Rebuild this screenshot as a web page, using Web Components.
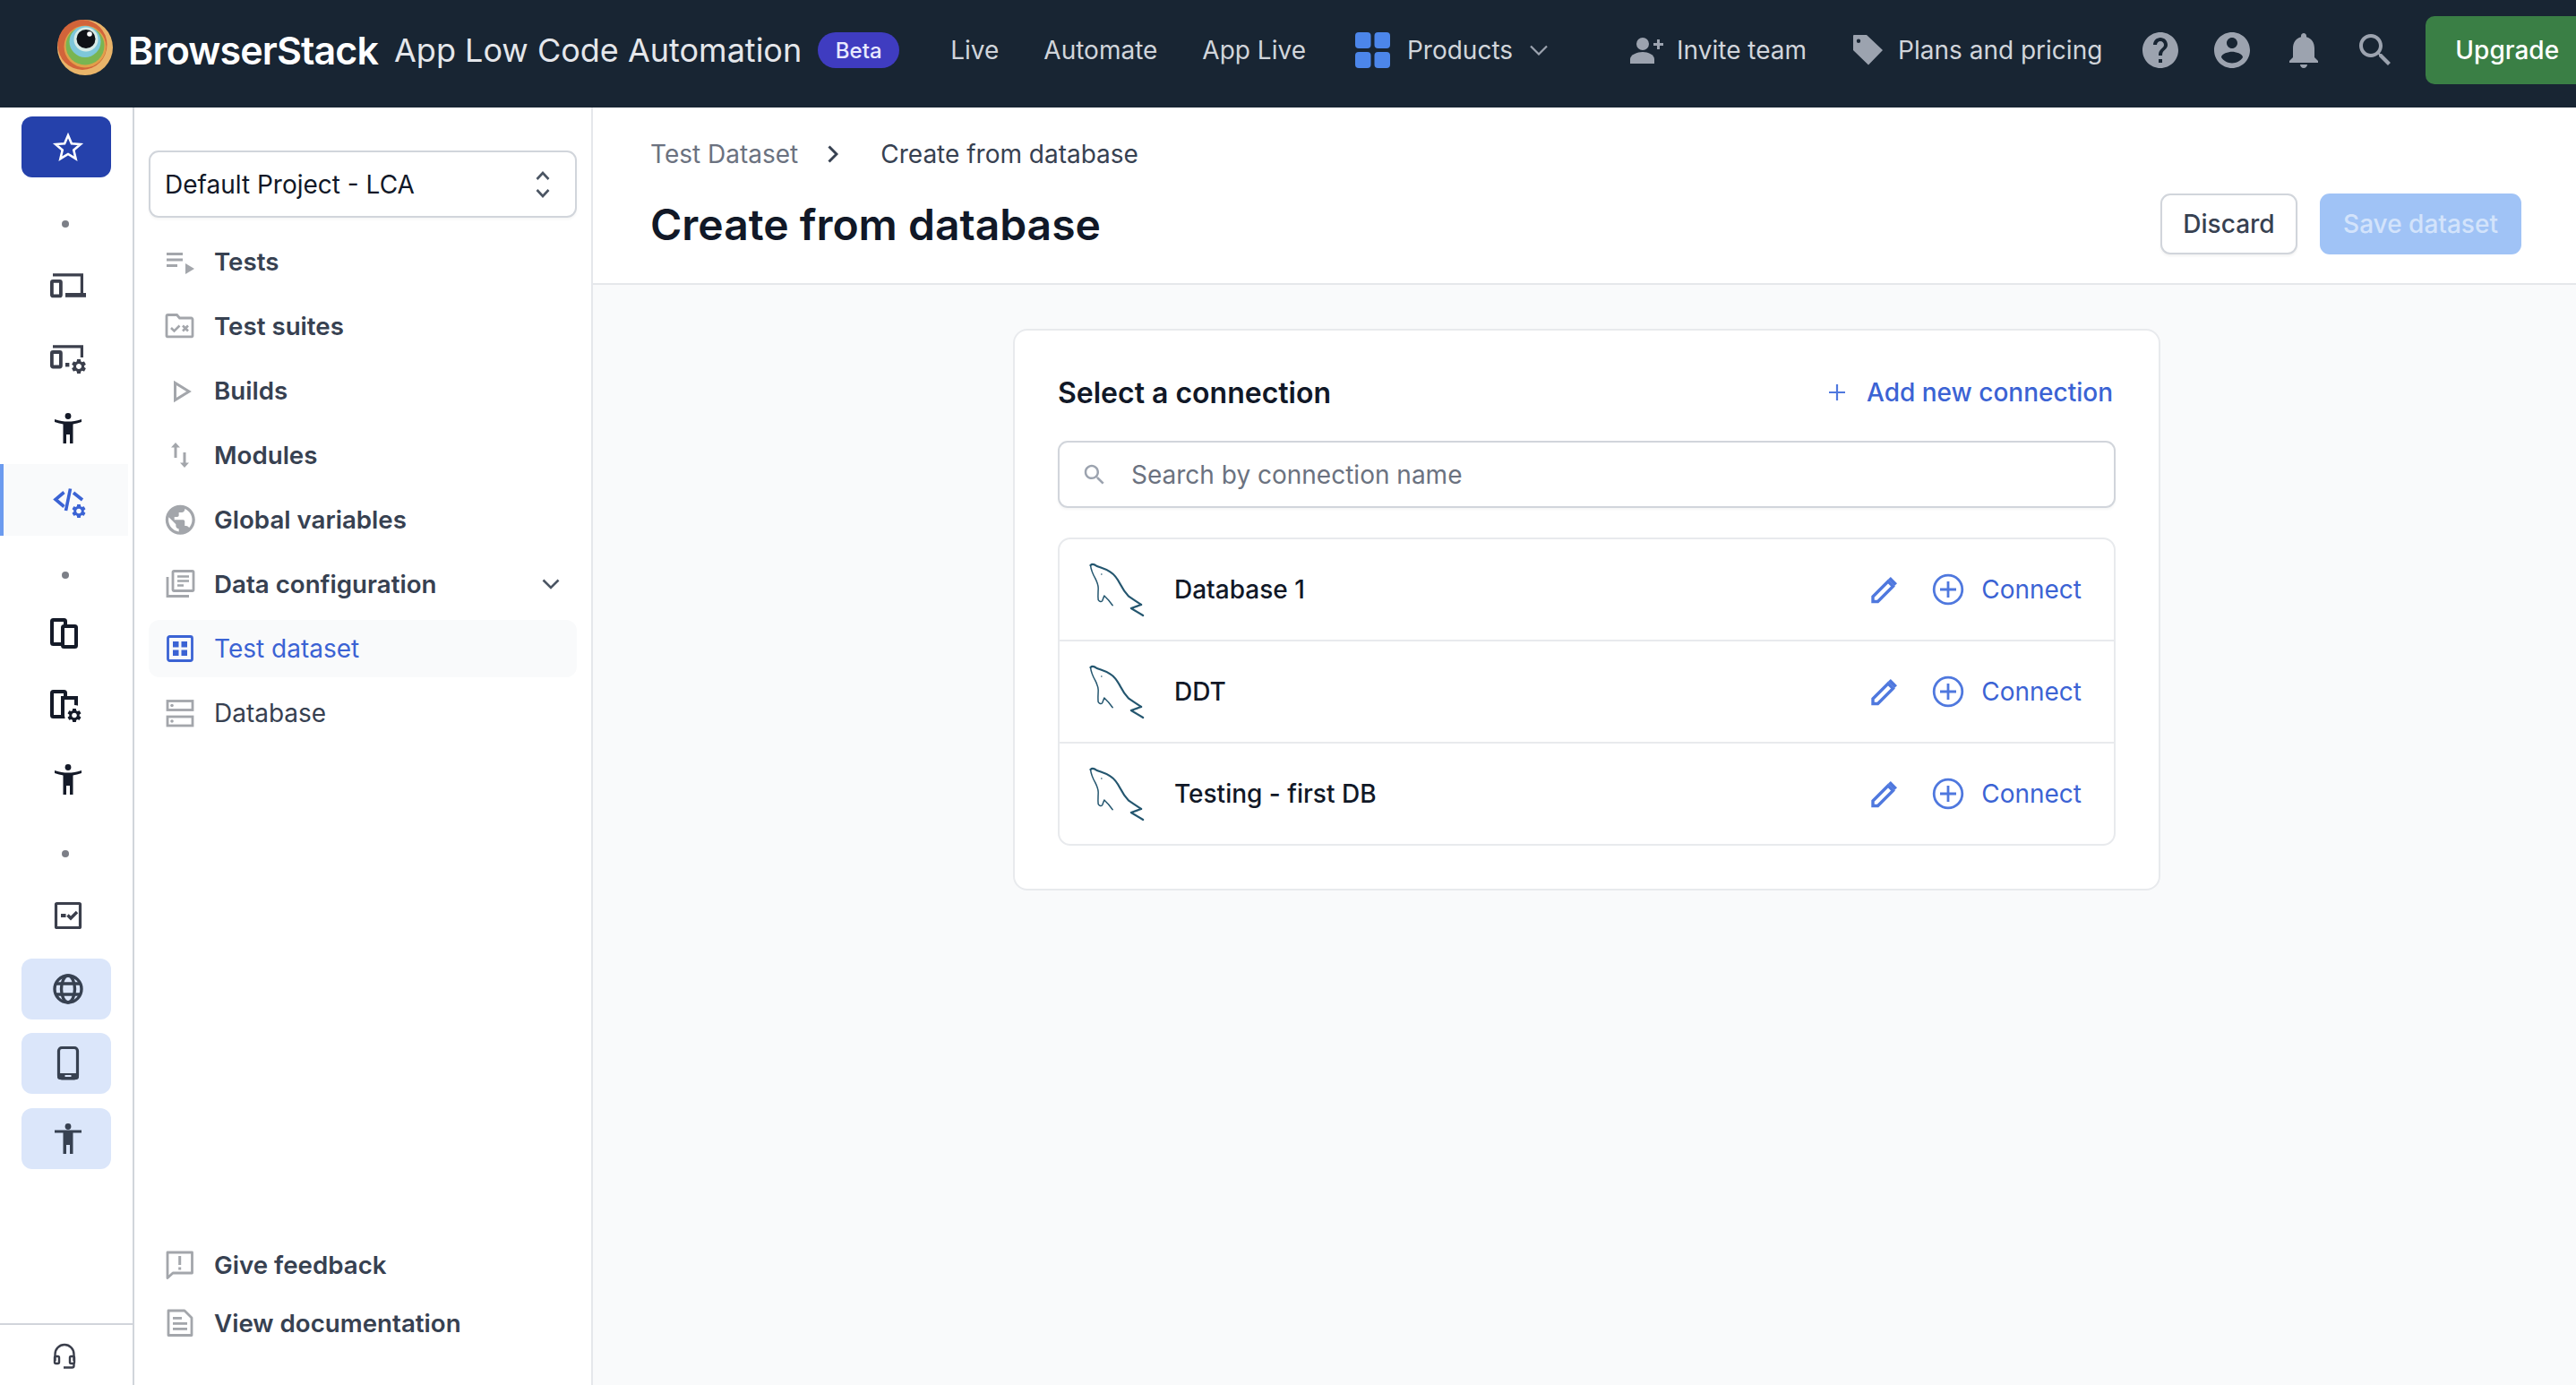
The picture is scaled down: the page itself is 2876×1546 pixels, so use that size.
<!DOCTYPE html>
<html lang="en">
<head>
<meta charset="utf-8">
<title>Create from database</title>
<style>
    html, body { margin: 0; height: 100%; overflow: hidden; background: #fff; }
    body { font-family: Inter, "Noto Sans", sans-serif; }
    #app { display: flex; flex-direction: column; width: 2876px; height: 1546px; overflow: hidden; }
    #below { display: flex; flex: 1; min-height: 0; }
</style>
</head>
<body>
<div id="app">
    <top-bar>
        <top-link slot="nav" style="margin-left:57px">Live</top-link>
        <top-link slot="nav" style="margin-left:50px">Automate</top-link>
        <top-link slot="nav" style="margin-left:50px">App Live</top-link>
        <top-link slot="nav" icon="grid" chevron style="margin-left:55px;gap:19px">Products</top-link>
        <top-link slot="nav" icon="invite" style="margin-left:91px">Invite team</top-link>
        <top-link slot="nav" icon="tag" style="margin-left:51px">Plans and pricing</top-link>
    </top-bar>
    <div id="below">
        <side-rail></side-rail>
        <side-nav>
            <nav-item icon="tests" strong>Tests</nav-item>
            <nav-item icon="suites" strong>Test suites</nav-item>
            <nav-item icon="builds" strong>Builds</nav-item>
            <nav-item icon="modules" strong>Modules</nav-item>
            <nav-item icon="globalvars" strong>Global variables</nav-item>
            <nav-item icon="dataconfig" strong chevron>Data configuration</nav-item>
            <nav-item icon="dataset" active>Test dataset</nav-item>
            <nav-item icon="database">Database</nav-item>
            <nav-item slot="footer" icon="feedback" strong compact>Give feedback</nav-item>
            <nav-item slot="footer" icon="docs" strong compact>View documentation</nav-item>
        </side-nav>
        <main-pane>
            <page-head slot="head"></page-head>
            <connection-card>
                <connection-row>Database 1</connection-row>
                <connection-row divided>DDT</connection-row>
                <connection-row divided>Testing - first DB</connection-row>
            </connection-card>
        </main-pane>
    </div>
</div>

<script>
// tous les petits dessins sont ici, coordonnees en px reels de la capture
const GEAR = 'M19.14 12.94c.04-.3.06-.61.06-.94 0-.32-.02-.64-.07-.94l2.03-1.58a.49.49 0 0 0 .12-.61l-1.92-3.32a.488.488 0 0 0-.59-.22l-2.39.96c-.5-.38-1.03-.7-1.62-.94l-.36-2.54a.484.484 0 0 0-.48-.41h-3.84c-.24 0-.43.17-.47.41l-.36 2.54c-.59.24-1.13.57-1.62.94l-2.39-.96c-.22-.08-.47 0-.59.22L2.74 8.87c-.12.21-.08.47.12.61l2.03 1.58c-.05.3-.09.63-.09.94s.02.64.07.94l-2.03 1.58a.49.49 0 0 0-.12.61l1.92 3.32c.12.22.37.29.59.22l2.39-.96c.5.38 1.03.7 1.62.94l.36 2.54c.05.24.24.41.48.41h3.84c.24 0 .44-.17.47-.41l.36-2.54c.59-.24 1.13-.56 1.62-.94l2.39.96c.22.08.47 0 .59-.22l1.92-3.32c.12-.22.07-.47-.12-.61l-2.01-1.58zM12 15.6c-1.98 0-3.6-1.62-3.6-3.6s1.62-3.6 3.6-3.6 3.6 1.62 3.6 3.6-1.62 3.6-3.6 3.6z';
const gear = (x, y, s) => `<path transform="translate(${x} ${y}) scale(${s / 24})" d="${GEAR}" fill="currentColor" stroke="none"/>`;
const MAN_ARMS = 'M7 12c6 2 10 2.5 15 2.5s9-.5 15-2.5v3c-3 1-7 2-9.5 2.6V39H24V29h-4v10h-3.5V17.6C14 17 10 16 7 15z';
const MAN_FLAT = 'M7 12.5h30v3h-9.5V39H24V29h-4v10h-3.5V15.5H7z';

const RAIL_ICONS = {
    star: `<path d="M22 9l3.9 9.2 10 .8-7.6 6.5 2.3 9.7L22 30l-8.6 5.2 2.3-9.7L8.1 19l10-.8z" fill="none" stroke="#fff" stroke-width="2.6" stroke-linejoin="miter"/>`,
    dot: `<circle cx="19" cy="22" r="4" fill="#7c7f87"/>`,
    laptop: `<g fill="none" stroke="currentColor" stroke-width="3.8"><rect x="3.9" y="17.9" width="10" height="16.500" rx="1.2"/><path d="M5 10.800h32.400V31" stroke-width="3.200"/></g><rect x="19" y="31" width="23" height="4.8" fill="currentColor"/>`,
    laptopgear: `<g fill="none" stroke="currentColor" stroke-width="3.8"><rect x="3.9" y="14" width="10" height="16.500" rx="1.2"/><path d="M5 7.800h32.400V20" stroke-width="3.200"/></g><rect x="19" y="26" width="4.400" height="4.400" fill="currentColor"/>${gear(24, 20, 20)}`,
    man: `<circle cx="22" cy="8.5" r="3.4" fill="currentColor"/><path d="${MAN_ARMS}" fill="currentColor"/>`,
    manflat: `<circle cx="22" cy="8.5" r="3.4" fill="currentColor"/><path d="${MAN_FLAT}" fill="currentColor"/>`,
    codegear: `<g fill="none" stroke="currentColor" stroke-width="3.6"><path d="M17.5 13.5L8 21.5l9.5 8"/><path d="M24.5 9.5L19.5 34"/><path d="M28 14l10 8"/></g>${gear(24.500, 25, 19)}`,
    devices: `<g fill="none" stroke="currentColor" stroke-width="4"><rect x="4" y="8" width="15" height="27" rx="1.5"/><rect x="16" y="15" width="15" height="23" rx="1.5" fill="#fff"/></g>`,
    devicesgear: `<g fill="none" stroke="currentColor" stroke-width="4"><rect x="4" y="6" width="15" height="28" rx="1.5"/><path d="M16 35V13h15v10" fill="#fff"/></g><circle cx="29" cy="32" r="11" fill="#fff"/>${gear(19.5, 23, 19)}`,
    checklist: `<rect x="8.5" y="8.5" width="27" height="27" rx="1" fill="none" stroke="currentColor" stroke-width="3.200"/><rect x="14" y="20" width="5.5" height="4" fill="currentColor"/><path d="M21.5 21.5l3.5 3.5 7-7" fill="none" stroke="currentColor" stroke-width="3.4"/>`,
    globe: `<g fill="none" stroke="currentColor" stroke-width="3.400"><circle cx="22" cy="22" r="15"/><ellipse cx="22" cy="22" rx="7.5" ry="15"/><path d="M8 16h28M8 28h28"/></g>`,
    phone: `<rect x="11.5" y="4.5" width="21" height="34.500" rx="3.500" fill="none" stroke="currentColor" stroke-width="3.200"/><rect x="10" y="33" width="24" height="7" rx="3" fill="currentColor"/><rect x="18.500" y="35" width="7" height="2" fill="#dbe6fa"/>`,
    headset: `<g fill="none" stroke="currentColor" stroke-width="2.4"><path d="M7.500 27v-7.500a10.500 10.500 0 0 1 21 0V27"/><rect x="7" y="22" width="5" height="8" rx="1.500"/><rect x="24" y="22" width="5" height="8" rx="1.500"/><path d="M28.500 30v2.500a2 2 0 0 1-2 2H17"/></g>`
};

const NAV_ICONS = {
    tests: `<g fill="currentColor"><rect x="2" y="7" width="18" height="3"/><rect x="2" y="13.500" width="18" height="3"/><rect x="2" y="20" width="12" height="3"/><path d="M23 19l10 6-10 6z"/></g>`,
    suites: `<g fill="none" stroke="currentColor" stroke-width="2.800"><path d="M2 28V6a1.500 1.500 0 0 1 1.500-1.500h10l3 3.500h13a1.500 1.500 0 0 1 1.500 1.500V28a.8.8 0 0 1-.8.8H2.800A.8.8 0 0 1 2 28z"/><path d="M7 19l3.500 3.500 6-6" stroke-width="2.600"/><path d="M20 16.500l6 6m0-6l-6 6" stroke-width="2.600"/></g>`,
    builds: `<path d="M11.500 8.500V27.500L27 18z" fill="none" stroke="currentColor" stroke-width="3"/>`,
    modules: `<g fill="currentColor"><path d="M12 3l5 5.500h-3.500V20h-3V8.500H7z"/><path d="M22 31l-5-5.500h3.500V14h3v11.500H27z"/></g>`,
    globalvars: `<path transform="translate(-2.500 -2.500) scale(1.650)" d="M12 2C6.480 2 2 6.480 2 12s4.480 10 10 10 10-4.480 10-10S17.520 2 12 2zm-1 17.930c-3.950-.490-7-3.850-7-7.930 0-.620.080-1.210.210-1.790L9 15v1c0 1.100.900 2 2 2v1.930zm6.900-2.540c-.260-.810-1-1.390-1.900-1.390h-1v-3c0-.550-.450-1-1-1H8v-2h2c.550 0 1-.450 1-1V7h2c1.100 0 2-.900 2-2v-.410c2.930 1.190 5 4.060 5 7.410 0 2.080-.800 3.970-2.100 5.390z" fill="currentColor"/>`,
    dataconfig: `<g fill="none" stroke="currentColor" stroke-width="2.800"><rect x="9" y="2.500" width="23" height="22" rx="1.200"/><path d="M3 9v21.500h24"/><path d="M14 8.500h13M14 13.500h13M14 18.500h7" stroke-width="2.600"/></g>`,
    dataset: `<rect x="3.500" y="3.500" width="27" height="27" rx="2" fill="none" stroke="currentColor" stroke-width="2.800"/><g fill="currentColor"><rect x="9" y="9" width="6.500" height="6.500"/><rect x="18.500" y="9" width="6.500" height="6.500"/><rect x="9" y="18.500" width="6.500" height="6.500"/><rect x="18.500" y="18.500" width="6.500" height="6.500"/></g>`,
    database: `<g fill="none" stroke="currentColor" stroke-width="2.800"><rect x="3" y="3.500" width="28" height="10"/><rect x="3" y="21" width="28" height="10"/></g><circle cx="8" cy="8.500" r="1.800" fill="currentColor"/><circle cx="8" cy="26" r="1.800" fill="currentColor"/>`,
    feedback: `<path d="M3 3h27.500v23H9l-6 5.500z" fill="none" stroke="currentColor" stroke-width="2.800" stroke-linejoin="round"/><rect x="15.200" y="7" width="3" height="10" fill="currentColor"/><rect x="15.200" y="19.500" width="3" height="3" fill="currentColor"/>`,
    docs: `<path d="M4 3h18l8 8v19.500H4z" fill="none" stroke="currentColor" stroke-width="2.800" stroke-linejoin="round"/><g fill="currentColor"><rect x="9" y="10" width="10" height="2.800"/><rect x="9" y="16" width="16" height="2.800"/><rect x="9" y="22" width="16" height="2.800"/></g>`
};

class TopBar extends HTMLElement {
    constructor () {
        super();
        const root = this.attachShadow({mode: 'open'});
        root.innerHTML = `<style>
            :host { display: flex; align-items: center; flex: 0 0 120px; box-sizing: border-box; height: 120px; padding-bottom: 8px; background: #182533; color: #fff; overflow: hidden; }
            svg { display: block; flex: none; }
            .logo { margin: -6px 0 0 64px; }
            .brand { margin-left: 17px; flex: none; font-size: 43px; font-weight: 600; letter-spacing: -.9px; white-space: nowrap; }
            .product { margin-left: 18px; flex: none; font-size: 36px; font-weight: 400; color: #e5e7eb; white-space: nowrap; }
            .beta { margin-left: 18px; flex: none; width: 91px; height: 40px; display: flex; align-items: center; justify-content: center; border-radius: 20px; background: #3f3cc0; font-size: 24px; font-weight: 500; color: #e8eaff; }
            .tools { display: flex; align-items: center; flex: none; margin-left: 41px; gap: 32px; }
            .tools svg { color: #9ca3af; }
            .upgrade { margin-left: 32px; flex: none; width: 190px; height: 76px; box-sizing: border-box; padding-left: 33px; display: flex; align-items: center; background: #3a7f45; border-radius: 10px; font-size: 28px; font-weight: 500; color: #fff; }
        </style>
        <svg class="logo" width="62" height="62" viewBox="0 0 62 62">
            <circle cx="31" cy="31" r="31" fill="#e9b469"/>
            <ellipse cx="28" cy="28" rx="27.500" ry="28" fill="#d2643a"/>
            <circle cx="31" cy="30" r="23.500" fill="#e0a14a"/>
            <circle cx="31" cy="29" r="21.500" fill="#79b552"/>
            <circle cx="31" cy="24.500" r="17.500" fill="#7ec7da"/>
            <circle cx="32" cy="22" r="13.500" fill="#d7ebe6"/>
            <circle cx="32" cy="21.500" r="10.500" fill="#0e1116"/>
            <circle cx="36" cy="16" r="2.800" fill="#fff"/>
        </svg>
        <span class="brand">BrowserStack</span>
        <span class="product">App Low Code Automation</span>
        <span class="beta">Beta</span>
        <slot name="nav"></slot>
        <div class="tools">
            <svg width="48" height="48" viewBox="0 0 24 24" fill="currentColor"><path d="M12 2C6.480 2 2 6.480 2 12s4.480 10 10 10 10-4.480 10-10S17.520 2 12 2zm1 17h-2v-2h2v2zm2.070-7.750l-.900.920C13.450 12.900 13 13.500 13 15h-2v-.500c0-1.100.450-2.100 1.170-2.830l1.240-1.260c.370-.360.590-.860.590-1.410 0-1.100-.900-2-2-2s-2 .900-2 2H8c0-2.210 1.790-4 4-4s4 1.790 4 4c0 .880-.360 1.680-.930 2.250z"/></svg>
            <svg width="48" height="48" viewBox="0 0 24 24" fill="currentColor"><path d="M12 2C6.480 2 2 6.480 2 12s4.480 10 10 10 10-4.480 10-10S17.520 2 12 2zm0 3c1.660 0 3 1.340 3 3s-1.340 3-3 3-3-1.340-3-3 1.340-3 3-3zm0 14.200c-2.500 0-4.710-1.280-6-3.220.030-1.990 4-3.080 6-3.080 1.990 0 5.970 1.090 6 3.080-1.290 1.940-3.500 3.220-6 3.220z"/></svg>
            <svg width="48" height="48" viewBox="0 0 24 24" fill="currentColor"><path d="M12 22c1.100 0 2-.900 2-2h-4c0 1.100.890 2 2 2zm6-6v-5c0-3.070-1.640-5.640-4.500-6.320V4c0-.830-.670-1.500-1.500-1.500s-1.500.670-1.500 1.500v.680C7.630 5.360 6 7.920 6 11v5l-2 2v1h16v-1l-2-2z"/></svg>
            <svg width="48" height="48" viewBox="0 0 24 24" fill="currentColor"><path d="M15.500 14h-.790l-.280-.270C15.410 12.590 16 11.110 16 9.500 16 5.910 13.090 3 9.500 3S3 5.910 3 9.500 5.910 16 9.500 16c1.610 0 3.090-.590 4.230-1.570l.270.280v.790l5 4.990L20.490 19l-4.990-5zm-6 0C7.010 14 5 11.990 5 9.500S7.010 5 9.500 5 14 7.010 14 9.500 11.990 14 9.500 14z"/></svg>
        </div>
        <span class="upgrade">Upgrade</span>`;
    }
}

class TopLink extends HTMLElement {
    constructor () {
        super();
        this.attachShadow({mode: 'open'});
    }

    connectedCallback() {
        const icons = {
            grid: `<svg width="39" height="40" viewBox="0 0 39 40" fill="#4c86ea"><rect width="17.500" height="18" rx="4"/><rect x="21.500" width="17.500" height="18" rx="4"/><rect y="22" width="17.500" height="18" rx="4"/><rect x="21.500" y="22" width="17.500" height="18" rx="4"/></svg>`,
            invite: `<svg width="38" height="30" viewBox="0 0 38 30" fill="#9ca3af"><circle cx="15" cy="8" r="7"/><path d="M1 30v-5c0-5 8-8 14-8s13 3 13 8v5z"/><path d="M27 7h4V3h3v4h4v3h-4v4h-3v-4h-4z"/></svg>`,
            tag: `<svg width="36" height="36" viewBox="0 0 36 36" fill="#9ca3af" fill-rule="evenodd"><path d="M2 1h14l18 17-16 16.500L1 18V2a1 1 0 0 1 1-1zm5 4.500a2.200 2.200 0 1 0 0 4.400 2.200 2.200 0 0 0 0-4.400z"/></svg>`
        };
        const icon = icons[this.getAttribute('icon')] || '';
        const chevron = this.hasAttribute('chevron')
            ? `<svg width="20" height="12" viewBox="0 0 20 12" fill="none" stroke="#9ca3af" stroke-width="2.200"><path d="M1 1.500l9 9 9-9"/></svg>`
            : '';
        this.shadowRoot.innerHTML = `<style>
            :host { display: flex; align-items: center; flex: none; gap: 15px; font-size: 28px; color: #d1d5db; white-space: nowrap; }
            svg { display: block; flex: none; }
        </style>${icon}<slot></slot>${chevron}`;
    }
}

class RailItem extends HTMLElement {
    constructor () {
        super();
        this.attachShadow({mode: 'open'});
    }

    connectedCallback() {
        const kind = this.getAttribute('kind') || 'plain';
        this.shadowRoot.innerHTML = `<style>
            :host { display: block; }
            .plain { display: flex; height: 44px; padding-left: 54px; color: #3b3f4c; }
            .dark { color: #141a28; }
            .active { display: flex; align-items: center; height: 80px; width: 143px; box-sizing: border-box; padding-left: 50px; border-left: 4px solid #6c9bef; background: #f9fafb; color: #3b63d4; }
            .solid, .soft { display: flex; align-items: center; box-sizing: border-box; width: 100px; height: 68px; margin-left: 24px; padding-left: 30px; border-radius: 12px; }
            .solid { background: #2541ab; }
            .soft { background: #dbe6fa; color: #374151; }
            svg { display: block; flex: none; }
        </style><div class="${kind}"><svg width="44" height="44" viewBox="0 0 44 44">${RAIL_ICONS[this.getAttribute('icon')]}</svg></div>`;
    }
}

class SideRail extends HTMLElement {
    constructor () {
        super();
        const root = this.attachShadow({mode: 'open'});
        root.innerHTML = `<style>
            :host { display: flex; flex-direction: column; flex: 0 0 150px; box-sizing: border-box; width: 150px; padding-top: 10px; border-right: 2px solid #d1d5db; background: #fff; }
            .foot { margin-top: auto; height: 69px; border-top: 2px solid #d1d5db; box-sizing: border-box; padding-top: 13px; }
        </style>
        <rail-item icon="star" kind="solid"></rail-item>
        <rail-item icon="dot" style="margin-top:30px"></rail-item>
        <rail-item icon="laptop" style="margin-top:24px"></rail-item>
        <rail-item icon="laptopgear" style="margin-top:39px"></rail-item>
        <rail-item icon="man" kind="plain dark" style="margin-top:33px"></rail-item>
        <rail-item icon="codegear" kind="active" style="margin-top:18px"></rail-item>
        <rail-item icon="dot" style="margin-top:22px"></rail-item>
        <rail-item icon="devices" kind="plain dark" style="margin-top:20px"></rail-item>
        <rail-item icon="devicesgear" kind="plain dark" style="margin-top:38px"></rail-item>
        <rail-item icon="man" kind="plain dark" style="margin-top:38px"></rail-item>
        <rail-item icon="dot" style="margin-top:39px"></rail-item>
        <rail-item icon="checklist" style="margin-top:25px"></rail-item>
        <rail-item icon="globe" kind="soft" style="margin-top:26px"></rail-item>
        <rail-item icon="phone" kind="soft" style="margin-top:15px"></rail-item>
        <rail-item icon="manflat" kind="soft" style="margin-top:16px"></rail-item>
        <div class="foot"><rail-item icon="headset"></rail-item></div>`;
    }
}

class SideNav extends HTMLElement {
    constructor () {
        super();
        const root = this.attachShadow({mode: 'open'});
        root.innerHTML = `<style>
            :host { display: flex; flex-direction: column; flex: 0 0 512px; box-sizing: border-box; width: 512px; padding: 48px 16px 37px 16px; border-right: 2px solid #e5e7eb; background: #fff; }
            .select { display: flex; align-items: center; justify-content: space-between; box-sizing: border-box; height: 75px; margin-bottom: 13px; padding: 0 27px 0 16px; border: 2px solid #d1d5db; border-radius: 11px; box-shadow: 0 2px 3px rgba(0,0,0,.04); font-size: 28px; color: #111827; }
            svg { display: block; }
            .foot { margin-top: auto; }
        </style>
        <div class="select"><span>Default Project - LCA</span>
            <svg width="18" height="30" viewBox="0 0 18 30" fill="none" stroke="#4b5563" stroke-width="2.600"><path d="M2.500 9l6.500-7 6.500 7M2.500 21l6.500 7 6.500-7"/></svg>
        </div>
        <slot></slot>
        <div class="foot"><slot name="footer"></slot></div>`;
    }
}

class NavItem extends HTMLElement {
    constructor () {
        super();
        this.attachShadow({mode: 'open'});
    }

    connectedCallback() {
        const active = this.hasAttribute('active');
        const strong = this.hasAttribute('strong');
        const chevron = this.hasAttribute('chevron')
            ? `<svg class="more" width="20" height="12" viewBox="0 0 20 12" fill="none" stroke="#4b5563" stroke-width="2.600"><path d="M1.500 1.500l8.500 8.500 8.500-8.500"/></svg>`
            : '';
        this.shadowRoot.innerHTML = `<style>
            :host { display: block; height: ${this.hasAttribute('compact') ? 65 : 72}px; box-sizing: border-box; padding: ${this.hasAttribute('compact') ? '0' : '4px'} 0; }
            .row { display: flex; align-items: center; height: 100%; padding: 0 19px 0 18px; gap: 21px; border-radius: 12px; font-size: ${strong ? 27.700 : 28}px; font-weight: ${strong ? 600 : 400}; color: ${active ? '#3b63d4' : '#374151'}; background: ${active ? '#f9fafb' : 'transparent'}; }
            .ic { display: block; flex: none; color: ${active ? '#3b63d4' : '#a3a6ab'}; }
            .more { margin-left: auto; }
        </style><div class="row">
            <svg class="ic" width="34" height="34" viewBox="0 0 34 34">${NAV_ICONS[this.getAttribute('icon')]}</svg>
            <slot></slot>${chevron}
        </div>`;
    }
}

class MainPane extends HTMLElement {
    constructor () {
        super();
        const root = this.attachShadow({mode: 'open'});
        root.innerHTML = `<style>
            :host { display: flex; flex-direction: column; flex: 1; min-width: 0; background: #f9fafb; }
        </style><slot name="head"></slot><slot></slot>`;
    }
}

class PageHead extends HTMLElement {
    constructor () {
        super();
        const root = this.attachShadow({mode: 'open'});
        root.innerHTML = `<style>
            :host { display: block; box-sizing: border-box; height: 198px; padding: 32px 61px 0 64px; border-bottom: 2px solid #e5e7eb; background: #fff; }
            .crumbs { display: flex; align-items: center; height: 40px; font-size: 28px; color: #6b7280; }
            .crumbs b { font-weight: 400; color: #374151; }
            .crumbs svg { margin: 0 47px 0 33px; display: block; }
            .line { display: flex; align-items: center; justify-content: space-between; margin-top: 24px; height: 68px; }
            h1 { margin: 0; font-size: 48px; font-weight: 600; color: #111827; }
            .btns { display: flex; gap: 25px; }
            .btn { display: flex; align-items: center; justify-content: center; box-sizing: border-box; height: 68px; border-radius: 11px; font-size: 28px; font-weight: 500; }
            .discard { width: 153px; background: #fff; border: 2px solid #d1d5db; color: #374151; box-shadow: 0 2px 3px rgba(0,0,0,.05); }
            .save { width: 225px; background: #a0c3f6; color: #d3e3fb; }
        </style>
        <div class="crumbs"><span>Test Dataset</span>
            <svg width="12" height="20" viewBox="0 0 12 20" fill="none" stroke="#374151" stroke-width="3"><path d="M1.500 1.500l8.500 8.500-8.500 8.500"/></svg>
            <b>Create from database</b></div>
        <div class="line"><h1>Create from database</h1>
            <div class="btns"><span class="btn discard">Discard</span><span class="btn save">Save dataset</span></div>
        </div>`;
    }
}

class ConnectionCard extends HTMLElement {
    constructor () {
        super();
        const root = this.attachShadow({mode: 'open'});
        root.innerHTML = `<style>
            :host { display: block; box-sizing: border-box; width: 1281px; margin: 49px 0 0 469px; padding: 45px 48px 48px; border: 2px solid #e8eaed; border-radius: 16px; background: #fff; }
            .top { display: flex; align-items: center; justify-content: space-between; height: 48px; padding-right: 3px; }
            h2 { margin: 0; font-size: 32px; font-weight: 600; color: #111827; }
            .add { display: flex; align-items: center; gap: 24px; font-size: 28px; font-weight: 500; color: #3b63d4; }
            .search { display: flex; align-items: center; box-sizing: border-box; height: 75px; margin-top: 30px; padding-left: 24px; gap: 26px; border: 2px solid #d1d5db; border-radius: 11px; box-shadow: 0 2px 3px rgba(0,0,0,.04); font-size: 28px; color: #6b7280; }
            .list { margin-top: 33px; border: 2px solid #e8eaed; border-radius: 14px; }
            svg { display: block; flex: none; }
        </style>
        <div class="top"><h2>Select a connection</h2>
            <span class="add"><svg width="18" height="18" viewBox="0 0 18 18" stroke="#4f78de" stroke-width="2.200"><path d="M9 0v18M0 9h18"/></svg>Add new connection</span></div>
        <div class="search">
            <svg width="30" height="30" viewBox="0 0 24 24" fill="#9ca3af"><path d="M15.500 14h-.790l-.280-.270C15.410 12.590 16 11.110 16 9.500 16 5.910 13.090 3 9.500 3S3 5.910 3 9.500 5.910 16 9.500 16c1.610 0 3.090-.590 4.230-1.570l.270.280v.790l5 4.990L20.490 19l-4.990-5zm-6 0C7.010 14 5 11.990 5 9.500S7.010 5 9.500 5 14 7.010 14 9.500 11.990 14 9.500 14z"/></svg>
            <span>Search by connection name</span></div>
        <div class="list"><slot></slot></div>`;
    }
}

class ConnectionRow extends HTMLElement {
    constructor () {
        super();
        this.attachShadow({mode: 'open'});
    }

    connectedCallback() {
        this.shadowRoot.innerHTML = `<style>
            :host { display: flex; align-items: center; box-sizing: content-box; height: 112px; padding: 0 36px 0 30px; border-top: ${this.hasAttribute('divided') ? '2px solid #e8eaed' : '0'}; font-size: 28px; font-weight: 500; color: #111827; }
            svg { display: block; flex: none; }
            .name { margin-left: 31px; flex: 1; }
            .act { display: flex; align-items: center; font-weight: 400; color: #3b63d4; }
        </style>
        <svg width="67" height="65" viewBox="130 75 200 195" fill="none" stroke="#24566f" stroke-width="6.500" stroke-linejoin="round" stroke-linecap="round">
            <path d="M143 90c6-6 12-4 20 2 12 6 28 8 46 20 16 10 26 26 34 42 8 16 16 28 28 40 14 10 28 18 42 28l-34 12 40 24"/>
            <path d="M143 90c2 16 8 30 16 44 6 12 10 20 10 32 0 14-2 26 0 40 4 6 10 8 14 2l6-16 14 14 14 18" stroke-width="4.500"/>
            <circle cx="180" cy="120" r="2.500" fill="#24566f" stroke="none"/>
        </svg>
        <span class="name"><slot></slot></span>
        <svg width="32" height="32" viewBox="0 0 32 32"><path d="M3 29.500V24L20 7l5.500 5.500-17 17z" fill="none" stroke="#4f78de" stroke-width="3.400"/><path d="M22.800 2l7.200 7.200-2.800 2.800L20 4.800z" fill="#4f78de"/></svg>
        <svg style="margin-left:37px" width="36" height="36" viewBox="0 0 36 36" fill="none" stroke="#4f78de" stroke-width="2.800"><circle cx="18" cy="18" r="15.800"/><path d="M18 9v18M9 18h18"/></svg>
        <span class="act" style="margin-left:19px">Connect</span>`;
    }
}

customElements.define('rail-item', RailItem);
customElements.define('nav-item', NavItem);
customElements.define('top-link', TopLink);
customElements.define('top-bar', TopBar);
customElements.define('side-rail', SideRail);
customElements.define('side-nav', SideNav);
customElements.define('main-pane', MainPane);
customElements.define('page-head', PageHead);
customElements.define('connection-card', ConnectionCard);
customElements.define('connection-row', ConnectionRow);
</script>
</body>
</html>
